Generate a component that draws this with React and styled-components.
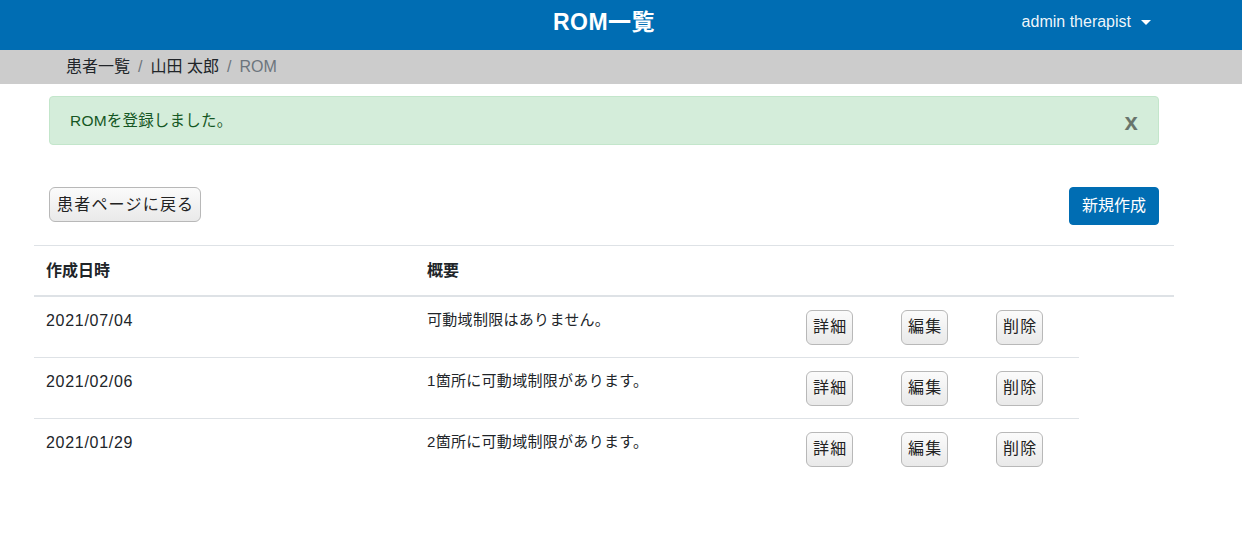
import React from "react";
import styled, { createGlobalStyle } from "styled-components";

const Global = createGlobalStyle`
  * { box-sizing: border-box; }
  body {
    margin: 0;
    font-family: "Helvetica Neue", Arial, "Liberation Sans", "Noto Sans CJK JP", sans-serif;
    font-size: 16px;
    line-height: 1.5;
    color: #212529;
    background: #fff;
  }
`;

const Navbar = styled.header`
  height: 50px;
  background: #006db3;
  display: grid;
  grid-template-columns: 1fr auto 1fr;
  align-items: center;
  color: #fff;
`;

const Title = styled.h1`
  grid-column: 2;
  margin: 0 34px 0 0;
  font-size: 23px;
  letter-spacing: 0.5px;
  font-weight: 700;
  line-height: 1;
  padding-bottom: 6px;
`;

const UserMenu = styled.div`
  justify-self: end;
  margin-right: 91px;
  font-size: 16px;
  padding-bottom: 6px;
  display: flex;
  align-items: center;
  gap: 10px;
  color: rgba(255, 255, 255, 0.95);
`;

const Caret = styled.span`
  width: 0;
  height: 0;
  border-left: 5px solid transparent;
  border-right: 5px solid transparent;
  border-top: 5px solid #fff;
`;

const Breadcrumb = styled.nav`
  height: 34px;
  background: #cccccc;
  display: flex;
  align-items: center;
  padding-left: 66px;
  font-size: 16px;
`;

const Crumb = styled.span`
  color: ${(p) => (p.$active ? "#6c757d" : "#212529")};
`;

const Sep = styled.span`
  color: #6c757d;
  padding: 0 8px;
`;

const Main = styled.main`
  width: 1140px;
  margin-left: 34px;
`;

const Alert = styled.div`
  margin: 12px 15px 0;
  padding: 12px 20px;
  background: #d4edda;
  border: 1px solid #c3e6cb;
  border-radius: 4px;
  color: #155724;
  display: flex;
  justify-content: space-between;
  align-items: center;
  font-size: 15.5px;
  letter-spacing: 0.2px;
  height: 49px;
`;

const Close = styled.span`
  font-size: 24px;
  font-weight: 700;
  color: #000;
  opacity: 0.5;
  line-height: 1;
  padding-top: 2px;
  font-family: Arial, "Liberation Sans", sans-serif;
`;

const Actions = styled.div`
  margin: 42px 15px 20px;
  display: flex;
  justify-content: space-between;
  align-items: flex-start;
`;

const PlainButton = styled.button`
  font-family: inherit;
  font-size: 16px;
  line-height: 24px;
  letter-spacing: 1.2px;
  color: #222;
  padding: 5px 6px 4px 7px;
  background: linear-gradient(#fbfbfb, #e9e9e9);
  border: 1px solid #b8b8b8;
  border-radius: 6px;
`;

const PrimaryButton = styled.button`
  font-family: inherit;
  font-size: 16px;
  line-height: 24px;
  color: #fff;
  padding: 6px 12px;
  background: #006db3;
  border: 1px solid #006db3;
  border-radius: 4px;
`;

const Table = styled.table`
  width: 1140px;
  border-collapse: collapse;
  table-layout: fixed;
`;

const Th = styled.th`
  text-align: left;
  font-weight: 700;
  font-size: 16px;
  padding: 12px;
  height: 50px;
  border-top: 1px solid #dee2e6;
  border-bottom: 2px solid #dee2e6;
  vertical-align: bottom;
`;

const Td = styled.td`
  padding: 12px;
  border-top: 1px solid #dee2e6;
  vertical-align: top;
  font-size: 15px;
  letter-spacing: 0.3px;
  height: 61px;
`;

const DateTd = styled(Td)`
  font-size: 16px;
  letter-spacing: 0.7px;
`;

const BtnTd = styled(Td)`
  padding: 13px 12px 12px;
`;

const SmallButton = styled(PlainButton)`
  padding: 4px 5px 5px 6px;
`;

const rows = [
  { date: "2021/07/04", summary: "可動域制限はありません。" },
  { date: "2021/02/06", summary: "1箇所に可動域制限があります。" },
  { date: "2021/01/29", summary: "2箇所に可動域制限があります。" },
];

export default function App() {
  return (
    <>
      <Global />
      <Navbar>
        <Title>ROM一覧</Title>
        <UserMenu>
          admin therapist <Caret />
        </UserMenu>
      </Navbar>
      <Breadcrumb>
        <Crumb>患者一覧</Crumb>
        <Sep>/</Sep>
        <Crumb>山田 太郎</Crumb>
        <Sep>/</Sep>
        <Crumb $active>ROM</Crumb>
      </Breadcrumb>
      <Main>
        <Alert>
          <span>ROMを登録しました。</span>
          <Close>x</Close>
        </Alert>
        <Actions>
          <PlainButton>患者ページに戻る</PlainButton>
          <PrimaryButton>新規作成</PrimaryButton>
        </Actions>
        <Table>
          <colgroup>
            <col style={{ width: 381 }} />
            <col style={{ width: 379 }} />
            <col style={{ width: 95 }} />
            <col style={{ width: 95 }} />
            <col style={{ width: 95 }} />
            <col style={{ width: 95 }} />
          </colgroup>
          <thead>
            <tr>
              <Th>作成日時</Th>
              <Th>概要</Th>
              <Th />
              <Th />
              <Th />
              <Th />
            </tr>
          </thead>
          <tbody>
            {rows.map((r) => (
              <tr key={r.date}>
                <DateTd>{r.date}</DateTd>
                <Td>{r.summary}</Td>
                <BtnTd><SmallButton>詳細</SmallButton></BtnTd>
                <BtnTd><SmallButton>編集</SmallButton></BtnTd>
                <BtnTd><SmallButton>削除</SmallButton></BtnTd>
              </tr>
            ))}
          </tbody>
        </Table>
      </Main>
    </>
  );
}
